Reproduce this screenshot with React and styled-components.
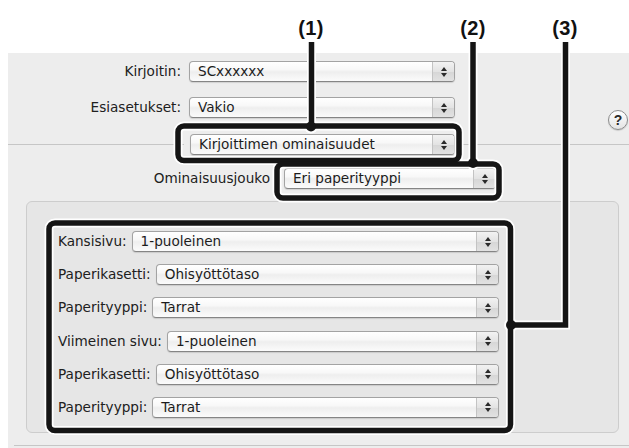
import React from "react";
import styled, { createGlobalStyle } from "styled-components";

const Global = createGlobalStyle`
  html, body { margin: 0; padding: 0; background: #ffffff; }
  body { font-family: "DejaVu Sans", "Noto Sans", sans-serif; color: #1e1e1e; }
  #root { width: 629px; height: 448px; overflow: hidden; }
`;

const Page = styled.div`
  position: relative;
  width: 629px;
  height: 448px;
  background: #ffffff;
`;

const Header = styled.div`
  height: 53px;
`;

const Dialog = styled.div`
  margin-left: 8px;
  height: 395px;
  background: #ededed;
  display: flex;
  flex-direction: column;
`;

const TopGrid = styled.div`
  padding-top: 8px;
  display: grid;
  grid-template-columns: 173px 266px 1fr;
  column-gap: 8px;
  row-gap: 15px;
  align-items: center;
`;

const Label = styled.span`
  font-size: 13.6px;
  line-height: 21px;
  white-space: nowrap;
  color: #202020;
  text-align: ${(p) => (p.$right ? "right" : "left")};
`;

const PopupBox = styled.div`
  display: flex;
  align-items: stretch;
  box-sizing: border-box;
  height: 21px;
  width: ${(p) => (p.$w ? `${p.$w}px` : "auto")};
  flex: ${(p) => (p.$w ? "none" : "1")};
  margin-left: ${(p) => p.$ml || 0}px;
  border: 1px solid #a3a3a3;
  border-bottom-color: #858585;
  border-radius: 4px;
  background: linear-gradient(#ffffff 0%, #f8f8f8 40%, #eeeeee 52%, #f6f6f6 80%, #fbfbfb 100%);
  box-shadow: 0 1px 1px rgba(0, 0, 0, 0.12);
  overflow: hidden;
`;

const PopupValue = styled.span`
  flex: 1;
  padding-left: 8px;
  font-size: 13.6px;
  line-height: 19px;
  white-space: nowrap;
  color: #1c1c1c;
`;

const Stepper = styled.span`
  width: 21px;
  border-left: 1px solid #c3c3c3;
  background: linear-gradient(#f2f2f2 0%, #e3e3e3 50%, #d6d6d6 52%, #e2e2e2 100%);
  display: flex;
  flex-direction: column;
  align-items: center;
  justify-content: center;
  gap: 2px;
`;

const Tri = styled.span`
  width: 0;
  height: 0;
  border-left: 3px solid transparent;
  border-right: 3px solid transparent;
  ${(p) =>
    p.$down
      ? "border-top: 4px solid #2a2a2a;"
      : "border-bottom: 4px solid #2a2a2a;"}
`;

const Popup = ({ children, w, ml }) => (
  <PopupBox $w={w} $ml={ml}>
    <PopupValue>{children}</PopupValue>
    <Stepper>
      <Tri />
      <Tri $down />
    </Stepper>
  </PopupBox>
);

const HelpButton = styled.span`
  justify-self: end;
  align-self: start;
  margin-top: 13px;
  margin-bottom: -13px;
  margin-right: 1px;
  box-sizing: border-box;
  width: 20px;
  height: 20px;
  border-radius: 50%;
  border: 1px solid #8c8c8c;
  background: linear-gradient(#ffffff, #e4e4e4);
  box-shadow: 0 1px 1px rgba(0, 0, 0, 0.15);
  display: flex;
  align-items: center;
  justify-content: center;
  font-family: "Liberation Sans", Arial, sans-serif;
  font-weight: bold;
  font-size: 14px;
  color: #2a2a2a;
`;

const SectionRow = styled.div`
  margin-top: 16px;
  display: flex;
  align-items: center;
`;

const Rule = styled.span`
  height: 1px;
  background: #c6c6c6;
  width: ${(p) => (p.$w ? `${p.$w}px` : "auto")};
  flex: ${(p) => (p.$w ? "none" : "1")};
  margin-left: ${(p) => p.$ml || 0}px;
`;

const FeatureRow = styled.div`
  margin-top: 13px;
  display: grid;
  grid-template-columns: 262px 212px;
  column-gap: 14px;
  align-items: center;
`;

const Panel = styled.div`
  margin: 12px 10px 0 18px;
  height: 232px;
  box-sizing: border-box;
  border: 1px solid #cdcdcd;
  border-radius: 6px;
  background: #e6e6e6;
  padding: 29px 0 0 31px;
  display: flex;
  flex-direction: column;
  gap: 12.2px;
`;

const PanelRow = styled.div`
  width: 441px;
  display: flex;
  align-items: center;
  gap: 5px;
`;

const BottomRule = styled.div`
  margin: 12px 0 0 6px;
  height: 1px;
  background: #c6c6c6;
`;

const Overlay = styled.svg`
  position: absolute;
  left: 0;
  top: 0;
  width: 629px;
  height: 448px;
  pointer-events: none;
`;

const Callout = styled.text`
  font-family: "Liberation Sans", Arial, sans-serif;
  font-weight: bold;
  font-size: 20px;
  letter-spacing: 0.3px;
  fill: #111;
`;

const panelRows = [
  ["Kansisivu:", "1-puoleinen"],
  ["Paperikasetti:", "Ohisyöttötaso"],
  ["Paperityyppi:", "Tarrat"],
  ["Viimeinen sivu:", "1-puoleinen"],
  ["Paperikasetti:", "Ohisyöttötaso"],
  ["Paperityyppi:", "Tarrat"],
];

const shapes = [
  { t: "rect", x: 178, y: 126, w: 281, h: 34.5 },
  { t: "rect", x: 277, y: 164, w: 222, h: 34 },
  { t: "rect", x: 49, y: 223, w: 461.5, h: 207.5 },
  { t: "path", d: "M311.5 42 V126" },
  { t: "path", d: "M473 42 V162" },
  { t: "path", d: "M565.5 42 V325 H511" },
];
const dots = [
  [311, 126.5],
  [473, 163],
  [511, 325],
];

const drawShapes = (stroke, width) =>
  shapes.map((s, i) =>
    s.t === "rect" ? (
      <rect
        key={i}
        x={s.x}
        y={s.y}
        width={s.w}
        height={s.h}
        rx="6"
        fill="none"
        stroke={stroke}
        strokeWidth={width}
      />
    ) : (
      <path key={i} d={s.d} fill="none" stroke={stroke} strokeWidth={width} />
    )
  );

export default function App() {
  return (
    <Page>
      <Global />
      <Header />
      <Dialog>
        <TopGrid>
          <Label $right>Kirjoitin:</Label>
          <Popup>SCxxxxxx</Popup>
          <span />
          <Label $right>Esiasetukset:</Label>
          <Popup>Vakio</Popup>
          <HelpButton>?</HelpButton>
        </TopGrid>
        <SectionRow>
          <Rule $w={176} />
          <Popup w={265} ml={6}>
            Kirjoittimen ominaisuudet
          </Popup>
          <Rule $ml={6} />
        </SectionRow>
        <FeatureRow>
          <Label $right>Ominaisuusjouko</Label>
          <Popup>Eri paperityyppi</Popup>
        </FeatureRow>
        <Panel>
          {panelRows.map(([l, v], i) => (
            <PanelRow key={i}>
              <Label>{l}</Label>
              <Popup>{v}</Popup>
            </PanelRow>
          ))}
        </Panel>
        <BottomRule />
      </Dialog>
      <Overlay viewBox="0 0 629 448">
        <Callout x="311" y="35" textAnchor="middle">(1)</Callout>
        <Callout x="473" y="35" textAnchor="middle">(2)</Callout>
        <Callout x="565" y="35" textAnchor="middle">(3)</Callout>
        {drawShapes("#ffffff", 9)}
        {dots.map(([cx, cy], i) => (
          <circle key={`h${i}`} cx={cx} cy={cy} r="7" fill="#ffffff" />
        ))}
        {drawShapes("#151515", 5.5)}
        {dots.map(([cx, cy], i) => (
          <circle key={`d${i}`} cx={cx} cy={cy} r="5" fill="#151515" />
        ))}
      </Overlay>
    </Page>
  );
}
